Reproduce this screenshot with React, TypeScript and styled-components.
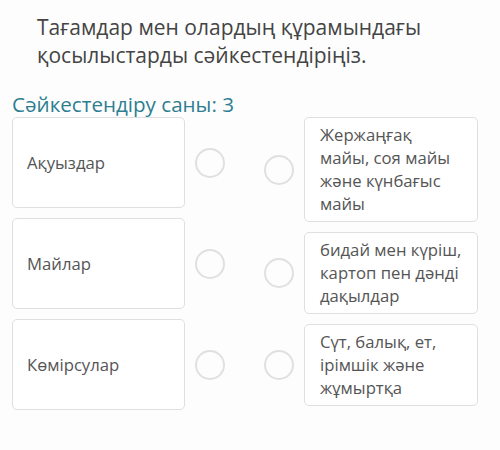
import React from "react";
import styled, { createGlobalStyle } from "styled-components";

interface Pair {
  left: string;
  right: string[];
}

const pairs: Pair[] = [
  {
    left: "Ақуыздар",
    right: ["Жержаңғақ", "майы, соя майы", "және күнбағыс", "майы"],
  },
  {
    left: "Майлар",
    right: ["бидай мен күріш,", "картоп пен дәнді", "дақылдар"],
  },
  {
    left: "Көмірсулар",
    right: ["Сүт, балық, ет,", "ірімшік және", "жұмыртқа"],
  },
];

const App = () => {
  return (
    <>
      <GlobalStyle />
      <Page>
        <Question>
          Тағамдар мен олардың құрамындағы
          <br />
          қосылыстарды сәйкестендіріңіз.
        </Question>

        <Count>Сәйкестендіру саны: 3</Count>

        <Board>
          <Column>
            {pairs.map(({ left }) => (
              <Row key={left}>
                <LeftCard>{left}</LeftCard>
                <Dot />
              </Row>
            ))}
          </Column>

          <Column>
            {pairs.map(({ right }) => (
              <Row key={right[0]}>
                <Dot />
                <RightCard>
                  {right.map((line, i) => (
                    <React.Fragment key={line}>
                      {i > 0 && <br />}
                      {line}
                    </React.Fragment>
                  ))}
                </RightCard>
              </Row>
            ))}
          </Column>
        </Board>
      </Page>
    </>
  );
};

export default App;

const GlobalStyle = createGlobalStyle`
  body {
    margin: 0;
    background: #fdfdfd;
    font-family: "Open Sans", "Noto Sans", sans-serif;
  }
`;

const Page = styled.div`
  padding: 13px 0 0 12px;
  width: 500px;
  height: 450px;
  box-sizing: border-box;
`;

const Question = styled.h1`
  margin: 0 0 0 25px;
  color: #444;
  font-size: 21px;
  font-weight: 400;
  line-height: 28px;
`;

const Count = styled.h2`
  margin: 22px 0 0;
  color: #2e7d91;
  font-size: 20.6px;
  font-weight: 400;
  line-height: 26px;
`;

const Board = styled.div`
  display: flex;
  gap: 39px;
`;

const Column = styled.div`
  display: flex;
  flex-direction: column;
  gap: 10px;
`;

const Row = styled.div`
  display: flex;
  align-items: center;
  gap: 10px;
`;

const Card = styled.div`
  background: #fff;
  border: 1px solid #dfdfdf;
  border-radius: 5px;
  box-sizing: border-box;
  color: #555;
  font-size: 16.7px;
`;

const LeftCard = styled(Card)`
  display: flex;
  align-items: center;
  width: 173px;
  height: 91px;
  padding-left: 14px;
`;

const RightCard = styled(Card)`
  width: 174px;
  padding: 5px 10px 6px 15px;
  line-height: 23px;
`;

const Dot = styled.div`
  width: 30px;
  height: 30px;
  box-sizing: border-box;
  border: 2px solid #e0e0e0;
  border-radius: 50%;
`;
